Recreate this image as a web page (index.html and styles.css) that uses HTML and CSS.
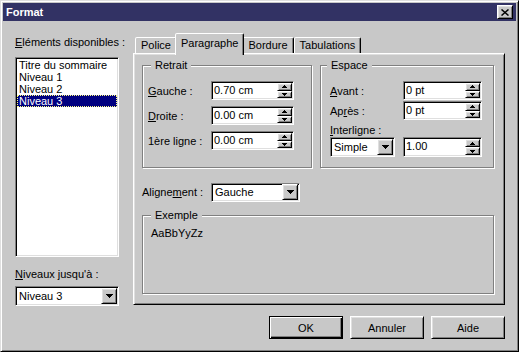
FILE: index.html
```html
<!DOCTYPE html>
<html lang="fr">
<head>
    <meta charset="UTF-8">
    <meta name="viewport" content="width=device-width, initial-scale=1.0">
    <title>Format</title>
    <link rel="stylesheet" href="styles.css">
</head>
<body>
    <div class="window">
        <div class="titlebar">
            <span class="title">Format</span>
            <span class="close-btn raised">
                <svg width="8" height="7" viewBox="0 0 8 7"><path d="M0.5 0.5L7.5 6.5M7.5 0.5L0.5 6.5" stroke="#000" stroke-width="1.5"/></svg>
            </span>
        </div>

        <div class="content">
            <div class="columns">
                <!-- colonne de gauche : liste des éléments -->
                <div class="left-col">
                    <div class="label list-label"><u>E</u>léments disponibles :</div>
                    <div class="listbox sunken">
                        <div class="item">Titre du sommaire</div>
                        <div class="item">Niveau 1</div>
                        <div class="item">Niveau 2</div>
                        <div class="item selected">Niveau 3</div>
                    </div>
                    <div class="label levels-label"><u>N</u>iveaux jusqu'à :</div>
                    <div class="combo sunken levels-combo">
                        <span class="combo-value">Niveau 3</span>
                        <span class="combo-btn raised">
                            <svg width="7" height="4" viewBox="0 0 7 4"><path d="M0 0h7v1H0zM1 1h5v1H1zM2 2h3v1H2zM3 3h1v1H3z" fill="#000"/></svg>
                        </span>
                    </div>
                </div>

                <!-- colonne de droite : onglets -->
                <div class="right-col">
                    <div class="tabs">
                        <div class="tab">Police</div>
                        <div class="tab active">Paragraphe</div>
                        <div class="tab">Bordure</div>
                        <div class="tab">Tabulations</div>
                    </div>
                    <div class="panel">
                        <div class="group-row">
                            <div class="group retrait">
                                <div class="group-title">Retrait</div>
                                <div class="field-row first">
                                    <span class="field-label"><u>G</u>auche :</span>
                                    <div class="spin-field sunken wide">
                                        <span class="field-value">0.70 cm</span>
                                        <span class="spin">
                                            <span class="spin-btn raised"><svg width="5" height="3" viewBox="0 0 5 3"><path d="M2 0h1v1H2zM1 1h3v1H1zM0 2h5v1H0z" fill="#000"/></svg></span>
                                            <span class="spin-btn raised"><svg width="5" height="3" viewBox="0 0 5 3"><path d="M0 0h5v1H0zM1 1h3v1H1zM2 2h1v1H2z" fill="#000"/></svg></span>
                                        </span>
                                    </div>
                                </div>
                                <div class="field-row">
                                    <span class="field-label"><u>D</u>roite :</span>
                                    <div class="spin-field sunken wide">
                                        <span class="field-value">0.00 cm</span>
                                        <span class="spin">
                                            <span class="spin-btn raised"><svg width="5" height="3" viewBox="0 0 5 3"><path d="M2 0h1v1H2zM1 1h3v1H1zM0 2h5v1H0z" fill="#000"/></svg></span>
                                            <span class="spin-btn raised"><svg width="5" height="3" viewBox="0 0 5 3"><path d="M0 0h5v1H0zM1 1h3v1H1zM2 2h1v1H2z" fill="#000"/></svg></span>
                                        </span>
                                    </div>
                                </div>
                                <div class="field-row">
                                    <span class="field-label">1ère ligne :</span>
                                    <div class="spin-field sunken wide">
                                        <span class="field-value">0.00 cm</span>
                                        <span class="spin">
                                            <span class="spin-btn raised"><svg width="5" height="3" viewBox="0 0 5 3"><path d="M2 0h1v1H2zM1 1h3v1H1zM0 2h5v1H0z" fill="#000"/></svg></span>
                                            <span class="spin-btn raised"><svg width="5" height="3" viewBox="0 0 5 3"><path d="M0 0h5v1H0zM1 1h3v1H1zM2 2h1v1H2z" fill="#000"/></svg></span>
                                        </span>
                                    </div>
                                </div>
                            </div>

                            <div class="group espace">
                                <div class="group-title">Espace</div>
                                <div class="field-row first">
                                    <span class="field-label"><u>A</u>vant :</span>
                                    <div class="spin-field sunken">
                                        <span class="field-value">0 pt</span>
                                        <span class="spin">
                                            <span class="spin-btn raised"><svg width="5" height="3" viewBox="0 0 5 3"><path d="M2 0h1v1H2zM1 1h3v1H1zM0 2h5v1H0z" fill="#000"/></svg></span>
                                            <span class="spin-btn raised"><svg width="5" height="3" viewBox="0 0 5 3"><path d="M0 0h5v1H0zM1 1h3v1H1zM2 2h1v1H2z" fill="#000"/></svg></span>
                                        </span>
                                    </div>
                                </div>
                                <div class="field-row tight">
                                    <span class="field-label">Ap<u>r</u>ès :</span>
                                    <div class="spin-field sunken">
                                        <span class="field-value">0 pt</span>
                                        <span class="spin">
                                            <span class="spin-btn raised"><svg width="5" height="3" viewBox="0 0 5 3"><path d="M2 0h1v1H2zM1 1h3v1H1zM0 2h5v1H0z" fill="#000"/></svg></span>
                                            <span class="spin-btn raised"><svg width="5" height="3" viewBox="0 0 5 3"><path d="M0 0h5v1H0zM1 1h3v1H1zM2 2h1v1H2z" fill="#000"/></svg></span>
                                        </span>
                                    </div>
                                </div>
                                <div class="label interligne-label"><u>I</u>nterligne :</div>
                                <div class="field-row interligne">
                                    <div class="combo sunken simple-combo">
                                        <span class="combo-value">Simple</span>
                                        <span class="combo-btn raised">
                                            <svg width="7" height="4" viewBox="0 0 7 4"><path d="M0 0h7v1H0zM1 1h5v1H1zM2 2h3v1H2zM3 3h1v1H3z" fill="#000"/></svg>
                                        </span>
                                    </div>
                                    <div class="spin-field sunken">
                                        <span class="field-value">1.00</span>
                                        <span class="spin">
                                            <span class="spin-btn raised"><svg width="5" height="3" viewBox="0 0 5 3"><path d="M2 0h1v1H2zM1 1h3v1H1zM0 2h5v1H0z" fill="#000"/></svg></span>
                                            <span class="spin-btn raised"><svg width="5" height="3" viewBox="0 0 5 3"><path d="M0 0h5v1H0zM1 1h3v1H1zM2 2h1v1H2z" fill="#000"/></svg></span>
                                        </span>
                                    </div>
                                </div>
                            </div>
                        </div>

                        <div class="align-row">
                            <span class="align-label">Aligne<u>m</u>ent :</span>
                            <div class="combo sunken align-combo">
                                <span class="combo-value">Gauche</span>
                                <span class="combo-btn raised">
                                    <svg width="7" height="4" viewBox="0 0 7 4"><path d="M0 0h7v1H0zM1 1h5v1H1zM2 2h3v1H2zM3 3h1v1H3z" fill="#000"/></svg>
                                </span>
                            </div>
                        </div>

                        <div class="group exemple">
                            <div class="group-title">Exemple</div>
                            <div class="sample">AaBbYyZz</div>
                        </div>
                    </div>
                </div>
            </div>

            <div class="buttons">
                <div class="btn default">OK</div>
                <div class="btn raised">Annuler</div>
                <div class="btn raised">Aide</div>
            </div>
        </div>
    </div>
</body>
</html>
```

FILE: styles.css
```css
body {
    margin: 0;
    background: #c8c8c8;
    font-family: "Liberation Sans", Arial, sans-serif;
    font-size: 11px;
    color: #000;
}

/* bordures style Windows */
.raised {
    box-sizing: border-box;
    background: #c8c8c8;
    border: 1px solid;
    border-color: #fff #000 #000 #fff;
    box-shadow: inset 1px 1px #dfdfdf, inset -1px -1px #808080;
}

.sunken {
    box-sizing: border-box;
    background: #fff;
    border: 1px solid;
    border-color: #808080 #fff #fff #808080;
    box-shadow: inset 1px 1px #000, inset -1px -1px #dfdfdf;
    padding: 1px;
}

.window {
    width: 519px;
    height: 352px;
    box-sizing: border-box;
    border: 1px solid;
    border-color: #dfdfdf #000 #000 #dfdfdf;
    box-shadow: inset 1px 1px #fff, inset -1px -1px #808080;
    padding: 2px;
}

.titlebar {
    height: 18px;
    background: #323264;
    display: flex;
    align-items: center;
    justify-content: space-between;
    padding: 0 3px 0 3px;
}

.title {
    color: #fff;
    font-weight: bold;
}

.close-btn {
    width: 16px;
    height: 14px;
    display: flex;
    align-items: center;
    justify-content: center;
}

.content {
    padding: 12px 11px 0 12px;
}

.columns {
    display: flex;
    gap: 14px;
}

.left-col {
    width: 104px;
}

.right-col {
    width: 372px;
}

.label {
    line-height: 13px;
    height: 13px;
    white-space: nowrap;
}

.list-label {
    margin: 3px 0 8px;
}

.listbox {
    height: 200px;
}

.item {
    line-height: 12px;
    padding-left: 2px;
    white-space: nowrap;
}

.item.selected {
    background: #000080;
    color: #fff;
    outline: 1px dotted #ffff80;
    outline-offset: -1px;
}

.levels-label {
    margin: 11px 0 5px;
}

.combo {
    height: 20px;
    display: flex;
    align-items: center;
}

.combo-value {
    flex: 1;
    padding-left: 2px;
    white-space: nowrap;
}

.combo-btn {
    width: 16px;
    height: 16px;
    display: flex;
    align-items: center;
    justify-content: center;
}

/* onglets */
.tabs {
    display: flex;
    align-items: flex-end;
    height: 20px;
    padding-left: 2px;
}

.tab {
    height: 16px;
    box-sizing: border-box;
    padding: 1px 5px 0;
    line-height: 13px;
    border: 1px solid;
    border-bottom: 0;
    border-color: #fff #000 transparent #fff;
    box-shadow: inset -1px 0 #808080;
    border-radius: 2px 2px 0 0;
    background: #c8c8c8;
    white-space: nowrap;
}

.tab.active {
    height: 22px;
    margin: 0 -2px -2px;
    padding-top: 3px;
    position: relative;
    z-index: 1;
}

.panel {
    height: 252px;
    box-sizing: border-box;
    border: 1px solid;
    border-color: #fff #000 #000 #fff;
    box-shadow: inset 1px 1px #dfdfdf, inset -1px -1px #808080;
    padding: 11px 10px 10px 8px;
    display: flex;
    flex-direction: column;
}

.group-row {
    display: flex;
    gap: 8px;
    height: 103px;
}

.group {
    box-sizing: border-box;
    border: 1px solid #808080;
    box-shadow: inset 1px 1px #fff, 1px 1px #fff;
}

.retrait {
    width: 170px;
    padding-left: 5px;
}

.espace {
    width: 174px;
    padding-left: 9px;
}

.group-title {
    width: fit-content;
    margin: -7px 0 0 3px;
    padding: 0 4px;
    line-height: 13px;
    background: #c8c8c8;
}

.espace .group-title {
    margin-left: -3px;
}

.field-row {
    display: flex;
    align-items: center;
    height: 19px;
    margin-top: 6px;
}

.field-row.first {
    margin-top: 9px;
}

.field-row.tight {
    margin-top: 1px;
}

.field-label {
    white-space: nowrap;
}

.retrait .field-label {
    width: 63px;
}

.espace .field-label {
    width: 73px;
}

.spin-field {
    height: 19px;
    width: 79px;
    display: flex;
}

.spin-field.wide {
    width: 83px;
}

.field-value {
    flex: 1;
    padding-left: 1px;
    line-height: 15px;
    white-space: nowrap;
}

.spin {
    width: 15px;
    display: flex;
    flex-direction: column;
}

.spin-btn {
    flex: 1;
    display: flex;
    align-items: center;
    justify-content: center;
}

.interligne-label {
    margin-top: 4px;
}

.field-row.interligne {
    height: 20px;
    margin-top: 0;
    gap: 8px;
}

.interligne .spin-field {
    height: 20px;
}

.simple-combo {
    width: 65px;
}

.align-row {
    display: flex;
    align-items: center;
    margin-top: 14px;
    height: 20px;
}

.align-label {
    width: 69px;
    white-space: nowrap;
}

.align-combo {
    width: 89px;
    height: 19px;
}

.exemple {
    flex: 1;
    margin-top: 13px;
    padding-left: 5px;
}

.sample {
    margin-top: 5px;
    padding-left: 3px;
    line-height: 13px;
}

.buttons {
    display: flex;
    justify-content: flex-end;
    gap: 7px;
    margin-top: 10px;
}

.btn {
    width: 74px;
    height: 23px;
    box-sizing: border-box;
    display: flex;
    align-items: center;
    justify-content: center;
}

.btn.default {
    background: #c8c8c8;
    border: 1px solid #000;
    box-shadow: inset 1px 1px #fff, inset -1px -1px #000, inset -2px -2px #808080;
}
```
